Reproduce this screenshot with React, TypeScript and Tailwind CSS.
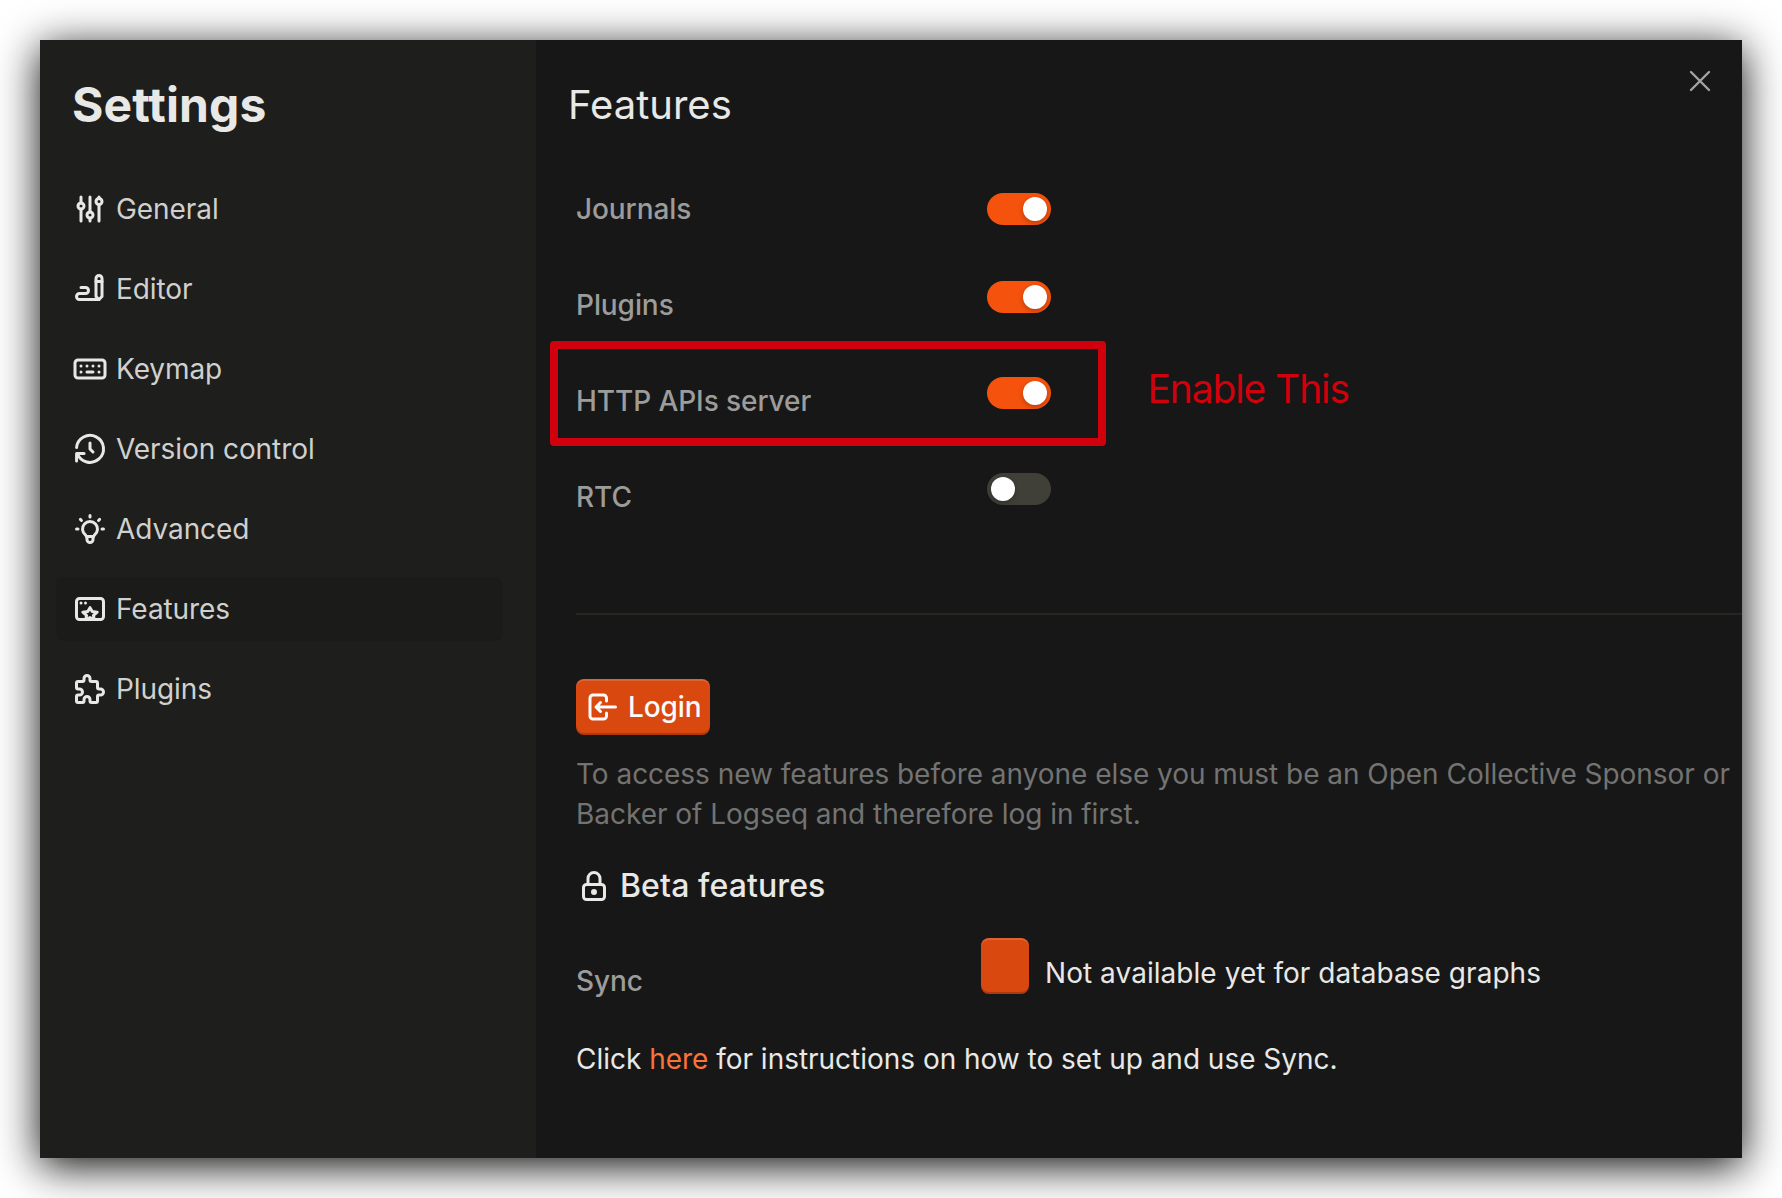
import type { ReactNode } from "react";

function Icon({ children, size = 36, stroke = 2 }: { children: ReactNode; size?: number; stroke?: number }) {
  return (
    <svg
      width={size}
      height={size}
      viewBox="0 0 24 24"
      fill="none"
      stroke="currentColor"
      strokeWidth={stroke}
      strokeLinecap="round"
      strokeLinejoin="round"
      className="shrink-0"
    >
      {children}
    </svg>
  );
}

const navItems: { label: string; active?: boolean; icon: ReactNode }[] = [
  {
    label: "General",
    icon: (
      <>
        <circle cx="6" cy="10" r="2" />
        <path d="M6 4v4M6 12v8" />
        <circle cx="12" cy="16" r="2" />
        <path d="M12 4v10M12 18v2" />
        <circle cx="18" cy="7" r="2" />
        <path d="M18 4v1M18 9v11" />
      </>
    ),
  },
  {
    label: "Editor",
    icon: (
      <>
        <path d="M20 17v-12c0 -1.121 -.879 -2 -2 -2s-2 .879 -2 2v12l2 2l2 -2z" />
        <path d="M16 7h4" />
        <path d="M18 19h-13a2 2 0 1 1 0 -4h4a2 2 0 1 0 0 -4h-3" />
      </>
    ),
  },
  {
    label: "Keymap",
    icon: (
      <>
        <rect x="2" y="6" width="20" height="12" rx="2" />
        <path d="M6 10v.01M10 10v.01M14 10v.01M18 10v.01M6 14v.01M18 14v.01M10 14l4 .01" />
      </>
    ),
  },
  {
    label: "Version control",
    icon: (
      <>
        <path d="M12 8v4l2 2" />
        <path d="M3.05 11a9 9 0 1 1 .5 4m-.5 5v-5h5" />
      </>
    ),
  },
  {
    label: "Advanced",
    icon: (
      <>
        <path d="M3 12h1m8 -9v1m8 8h1m-15.4 -6.4l.7 .7m12.1 -.7l-.7 .7" />
        <path d="M9 16a5 5 0 1 1 6 0a3.5 3.5 0 0 0 -1 3a2 2 0 0 1 -4 0a3.5 3.5 0 0 0 -1 -3" />
        <path d="M9.7 17h4.6" />
      </>
    ),
  },
  {
    label: "Features",
    active: true,
    icon: (
      <>
        <rect x="3" y="5" width="18" height="14" rx="2" />
        <path d="M6 8v.01M9 8v.01" />
        <path d="M9.2 19l.5 -2.8l-2.5 -2.1l3.3 -.4l1.5 -2.6l1.5 2.6l3.3 .4l-2.5 2.1l.5 2.8l-2.8 -1.3z" />
      </>
    ),
  },
  {
    label: "Plugins",
    icon: (
      <path d="M4 7h3a1 1 0 0 0 1 -1v-1a2 2 0 0 1 4 0v1a1 1 0 0 0 1 1h3a1 1 0 0 1 1 1v3a1 1 0 0 0 1 1h1a2 2 0 0 1 0 4h-1a1 1 0 0 0 -1 1v3a1 1 0 0 1 -1 1h-3a1 1 0 0 1 -1 -1v-1a2 2 0 0 0 -4 0v1a1 1 0 0 1 -1 1h-3a1 1 0 0 1 -1 -1v-3a1 1 0 0 1 1 -1h1a2 2 0 0 0 0 -4h-1a1 1 0 0 1 -1 -1v-3a1 1 0 0 1 1 -1" />
    ),
  },
];

function Toggle({ on }: { on: boolean }) {
  return (
    <button
      role="switch"
      aria-checked={on}
      className={
        on
          ? "flex h-8 w-16 items-center justify-end rounded-full bg-[#f4520d] p-1"
          : "flex h-8 w-16 items-center rounded-full bg-[#403f38] p-1"
      }
    >
      <span className="size-6 rounded-full bg-white shadow-[0_2px_5px_rgba(0,0,0,0.25)]" />
    </button>
  );
}

function FeatureRow({ label, on }: { label: string; on: boolean }) {
  return (
    <div className="flex h-24 items-start">
      <div className="w-[411px] pt-2 font-medium tracking-[-0.08px] text-[#9c9c9a]">{label}</div>
      <div className="pt-1">
        <Toggle on={on} />
      </div>
    </div>
  );
}

const orangeButton =
  "flex h-14 items-center rounded-lg bg-[#d9480f] px-2 font-medium text-[#f8fafc] shadow-[inset_0_2px_0_rgba(255,255,255,0.15),inset_0_-2px_0_rgba(0,0,0,0.2)]";

export default function App() {
  return (
    <div className="h-[1198px] w-[1782px] overflow-hidden bg-white p-10 font-['Inter',sans-serif] text-[28px] leading-10">
      <div className="flex h-[1118px] w-[1702px] bg-[#171717] text-[#e8e8e6] shadow-[0_8px_40px_rgba(0,0,0,0.96)]">
        <aside className="w-[496px] bg-[#1e1e1c] px-4 pt-[37px]">
          <h1 className="ml-4 h-[100px] text-[48px] leading-[56px] font-bold tracking-[0.12px]">Settings</h1>
          <nav className="flex w-[447px] flex-col gap-4">
            {navItems.map((item) => (
              <a
                key={item.label}
                className={
                  item.active
                    ? "flex h-16 items-center gap-2 rounded-lg bg-[#1b1b19] px-4"
                    : "flex h-16 items-center gap-2 rounded-lg px-4"
                }
              >
                <Icon>{item.icon}</Icon>
                <span className="tracking-[-0.07px] text-[#d0d0ce]">{item.label}</span>
              </a>
            ))}
          </nav>
        </aside>

        <main className="relative flex-1 pt-[41px] pl-8">
          <button className="absolute top-[23px] right-[24px] text-[#a3a3a1]">
            <Icon stroke={1.6}>
              <path d="M18 6l-12 12M6 6l12 12" />
            </Icon>
          </button>

          <h2 className="h-[104px] text-[40px] leading-[48px]">Features</h2>

          <div className="pl-2">
            <div>
              <div className="flex h-[92px] items-start pt-1">
                <div className="w-[411px] font-medium tracking-[-0.08px] text-[#9c9c9a]">Journals</div>
                <div className="pt-1">
                  <Toggle on />
                </div>
              </div>
              <FeatureRow label="Plugins" on />
              <div className="relative">
                <FeatureRow label="HTTP APIs server" on />
                <div className="absolute -top-8 -left-[26.5px] h-[105px] w-[556px] rounded-[4px] border-8 border-[#d0000c]" />
                <div className="absolute top-[-8px] left-[571.5px] text-[39px] leading-[48px] tracking-[-1.12px] whitespace-nowrap text-[#d0000c]">
                  Enable This
                </div>
              </div>
              <FeatureRow label="RTC" on={false} />
            </div>

            <hr className="mt-12 h-0.5 border-0 bg-[#262621]" />

            <button className={`${orangeButton} mt-16 w-[134px] gap-2 tracking-[-0.1px]`}>
              <Icon>
                <path d="M15 8v-2a2 2 0 0 0 -2 -2h-7a2 2 0 0 0 -2 2v12a2 2 0 0 0 2 2h7a2 2 0 0 0 2 -2v-2" />
                <path d="M21 12h-13l3 -3M11 15l-3 -3" />
              </Icon>
              Login
            </button>

            <p className="mt-[19px] tracking-[-0.035px] whitespace-nowrap text-[#737372]">
              To access new features before anyone else you must be an Open Collective Sponsor or
              <br />
              Backer of Logseq and therefore log in first.
            </p>

            <div className="mt-[34px] flex h-9 items-center gap-2">
              <Icon>
                <rect x="5" y="11" width="14" height="10" rx="2" />
                <circle cx="12" cy="16" r="1" />
                <path d="M8 11v-4a4 4 0 0 1 8 0v4" />
              </Icon>
              <h3 className="text-[32px] leading-9 font-medium tracking-[0.1px]">Beta features</h3>
            </div>

            <div className="mt-[34px] flex h-[101px] items-start">
              <div className="w-[405px] pt-[23px] font-medium tracking-[-0.1px] text-[#9c9c9a]">Sync</div>
              <button aria-label="Sync" className={`${orangeButton} w-12`} />
              <div className="ml-4 pt-[15px] tracking-[0.05px]">Not available yet for database graphs</div>
            </div>

            <p className="tracking-[-0.02px]">
              Click <a className="text-[#f9733a]">here</a> for instructions on how to set up and use Sync.
            </p>
          </div>
        </main>
      </div>
    </div>
  );
}
